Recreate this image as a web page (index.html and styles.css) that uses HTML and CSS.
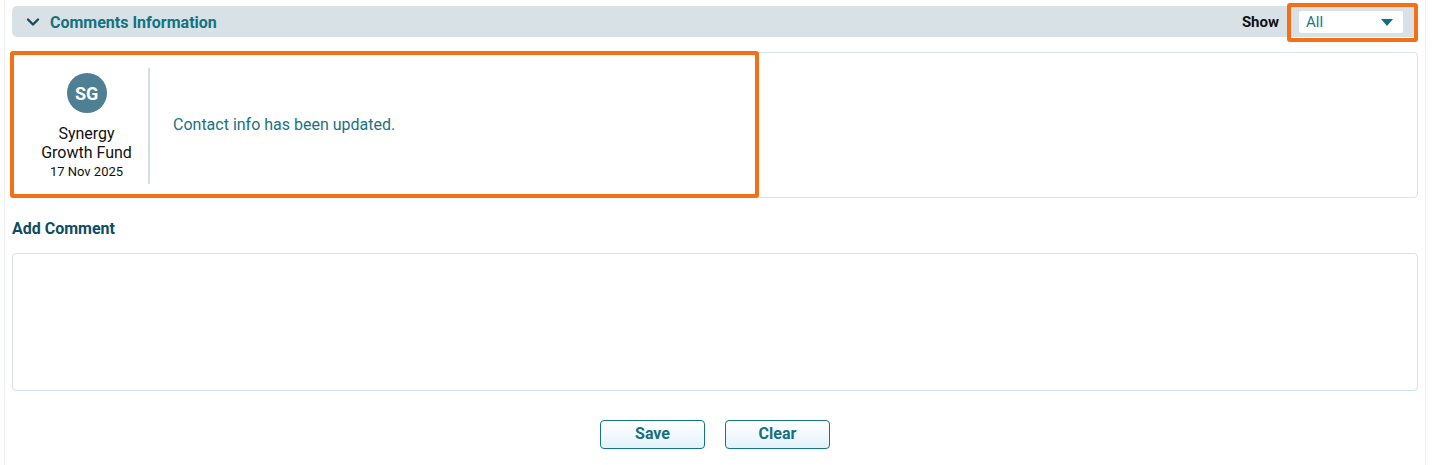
FILE: index.html
```html
<!DOCTYPE html>
<html lang="en">
<head>
<meta charset="utf-8">
<title>Comments Information</title>
<link rel="stylesheet" href="styles.css">
</head>
<body>
<div class="page">
  <div class="section-header">
    <div class="section-title">
      <svg class="chevron" width="14" height="10" viewBox="0 0 14 10"><path d="M2 2.5 L7 7.5 L12 2.5" fill="none" stroke="#1d4a5a" stroke-width="2.4" stroke-linecap="round" stroke-linejoin="round"/></svg>
      <span>Comments Information</span>
    </div>
    <div class="show-filter">
      <span class="show-label">Show</span>
      <div class="select-wrap highlight">
        <div class="select">
          <span>All</span>
          <svg width="12" height="7" viewBox="0 0 12 7"><path d="M0 0 L12 0 L6 7 Z" fill="#136f7c"/></svg>
        </div>
      </div>
    </div>
  </div>

  <div class="comment-card">
    <div class="comment-item highlight">
      <div class="author">
        <div class="avatar">SG</div>
        <div class="author-name">Synergy<br>Growth Fund</div>
        <div class="author-date">17 Nov 2025</div>
      </div>
      <div class="message">Contact info has been updated.</div>
    </div>
  </div>

  <div class="add-label">Add Comment</div>
  <div class="comment-input"></div>

  <div class="actions">
    <button class="btn">Save</button>
    <button class="btn">Clear</button>
  </div>
</div>
</body>
</html>
```

FILE: styles.css
```css
* { box-sizing: border-box; }
html, body { margin: 0; padding: 0; background: #ffffff; }
body {
  font-family: Roboto, "Liberation Sans", Arial, sans-serif;
  color: #111;
}
.page {
  margin-left: 4px;
  width: 1422px;
  height: 465px;
  border-left: 1px solid #f0f0f0;
  border-right: 1px solid #f0f0f0;
  padding: 6px 7px 0 7px;
}
.section-header {
  height: 31px;
  background: #d8e2e6;
  border-radius: 5px;
  display: flex;
  align-items: center;
  justify-content: space-between;
  padding: 0 15px 0 14px;
}
.section-title {
  display: flex;
  align-items: center;
  gap: 10px;
  font-size: 16px;
  font-weight: 700;
  color: #137280;
  padding-top: 1px;
}
.chevron { display: block; margin-top: 0; }
.show-filter {
  display: flex;
  align-items: center;
  gap: 20px;
}
.show-label {
  font-size: 15px;
  font-weight: 700;
  color: #111;
  padding-top: 1px;
}
.select-wrap { position: relative; }
.select {
  width: 104px;
  height: 22px;
  background: #fff;
  border-radius: 2px;
  display: flex;
  align-items: center;
  justify-content: space-between;
  padding: 0 10px 0 7px;
  font-size: 15px;
  color: #137a8a;
}
.select svg { display: block; margin-top: 2px; }
.highlight::after {
  content: "";
  position: absolute;
  border: 4px solid #f56f16;
  border-radius: 3px;
  pointer-events: none;
}
.select-wrap::after { top: -8px; left: -12px; right: -15px; bottom: -9px; }

.comment-card {
  margin-top: 15px;
  height: 146px;
  border: 1px solid #d9e4e6;
  border-radius: 4px;
  display: flex;
}
.comment-item {
  position: relative;
  width: 742px;
  display: flex;
  align-items: stretch;
  padding: 15px 0 13px 13px;
}
.comment-item::after { top: -2px; left: -3px; right: -4px; bottom: -1px; }
.author {
  width: 124px;
  border-right: 2px solid #d3e0e3;
  display: flex;
  flex-direction: column;
  align-items: center;
  padding-right: 1px;
  padding-top: 5px;
}
.avatar {
  width: 40px;
  height: 40px;
  border-radius: 50%;
  background: #4f7f92;
  color: #fff;
  font-weight: 700;
  font-size: 18px;
  display: flex;
  align-items: center;
  justify-content: center;
  letter-spacing: -0.3px;
}
.author-name {
  margin-top: 11px;
  font-size: 16px;
  line-height: 19px;
  text-align: center;
  color: #111;
}
.author-date {
  margin-top: 1px;
  font-size: 13px;
  line-height: 17px;
  color: #111;
}
.message {
  display: flex;
  align-items: center;
  padding-left: 23px;
  padding-bottom: 4px;
  font-size: 16px;
  color: #1a7281;
}
.add-label {
  margin-top: 20px;
  font-size: 16px;
  font-weight: 700;
  color: #0d4d62;
  line-height: 20px;
  padding-top: 1px;
}
.comment-input {
  margin-top: 14px;
  height: 138px;
  border: 1px solid #d6e2e4;
  border-radius: 4px;
}
.actions {
  display: flex;
  justify-content: center;
  gap: 20px;
  margin-top: 29px;
}
.btn {
  width: 105px;
  height: 29px;
  border: 1px solid #157581;
  border-radius: 4px;
  background: linear-gradient(#ffffff, #e3f2fb);
  font-family: Roboto, "Liberation Sans", Arial, sans-serif;
  font-size: 16px;
  font-weight: 700;
  color: #17707e;
  padding: 0 0 2px 0;
}
```
